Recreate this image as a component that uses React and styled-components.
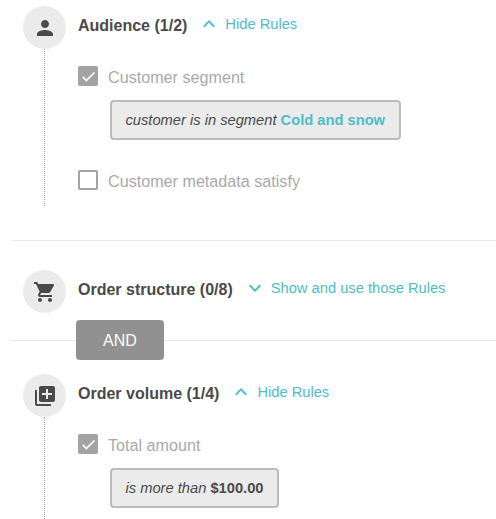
import React from 'react';
import styled, { createGlobalStyle } from 'styled-components';
import { MdPerson, MdShoppingCart, MdLibraryAdd, MdKeyboardArrowUp, MdKeyboardArrowDown, MdCheck } from 'react-icons/md';

const GlobalStyle = createGlobalStyle`
  html, body {
    margin: 0;
    padding: 0;
    background: #fff;
    overflow: hidden;
  }
  body {
    font-family: "Liberation Sans", Arial, sans-serif;
  }
`

const Page = styled.div`
  width: 496px;
  height: 519px;
  overflow: hidden;
`

const Section = styled.section`
  position: relative;
  margin-left: 12px;
  padding: ${(p) => p.$top}px 0 0 11px;
  height: ${(p) => p.$height}px;
  box-sizing: border-box;
  border-bottom: ${(p) => (p.$last ? '0' : '1px solid #e9e9e9')};
`

const Header = styled.div`
  display: flex;
  align-items: center;
  height: 43px;
`

const IconCircle = styled.div`
  width: 43px;
  height: 43px;
  border-radius: 50%;
  background: #ebebeb;
  color: #4a4a4a;
  display: flex;
  align-items: center;
  justify-content: center;
  flex-shrink: 0;
  font-size: 24px;
`

const Title = styled.h3`
  margin: 0 0 0 12px;
  padding-bottom: 4px;
  font-size: 16px;
  line-height: 20px;
  font-weight: 700;
  color: #4a4a4a;
  white-space: nowrap;
`

const Toggle = styled.a`
  display: flex;
  align-items: center;
  margin-left: 10px;
  padding-bottom: 7px;
  font-size: 14.7px;
  line-height: 20px;
  color: #4fbcc8;
  white-space: nowrap;
  svg {
    font-size: 24px;
    margin-right: 4px;
  }
`

const Body = styled.div`
  margin-left: 21px;
  padding: 17px 0 0 33px;
  height: ${(p) => p.$height}px;
  box-sizing: border-box;
  border-left: 1px dotted #a8a8a8;
`

const Rule = styled.div`
  margin-bottom: ${(p) => p.$gap || 0}px;
`

const RuleRow = styled.label`
  display: flex;
  align-items: center;
  gap: 10px;
  height: 20px;
  font-size: 16.15px;
  color: #a9a9a9;
`

const RuleName = styled.span`
  padding-top: 3px;
`

const Checkbox = styled.span`
  width: 20px;
  height: 20px;
  box-sizing: border-box;
  border-radius: 2px;
  border: 2px solid #a3a3a3;
  background: ${(p) => (p.$checked ? '#a3a3a3' : '#fff')};
  color: #f0f0f0;
  display: flex;
  align-items: center;
  justify-content: center;
  font-size: 17px;
  flex-shrink: 0;
  svg {
    flex-shrink: 0;
  }
  svg path:last-child {
    stroke: currentColor;
    stroke-width: 1;
  }
`

const Condition = styled.div`
  display: inline-block;
  margin: 14px 0 0 32px;
  padding: 0 13.5px;
  height: 40px;
  line-height: 36px;
  box-sizing: border-box;
  border: 2px solid #bcbcbc;
  border-radius: 4px;
  background: #ebebeb;
  font-size: 14.7px;
  font-style: italic;
  color: #4a4a4a;
  white-space: nowrap;
`

const Value = styled.b`
  font-style: normal;
  font-weight: 700;
  color: ${(p) => (p.$accent ? '#4fbcc8' : '#4a4a4a')};
`

const AndBadge = styled.div`
  position: absolute;
  left: 64px;
  bottom: -20px;
  width: 88px;
  height: 40px;
  border-radius: 4px;
  background: #919191;
  color: #fff;
  font-size: 16px;
  line-height: 41px;
  text-align: center;
  z-index: 1;
`

export default function App() {
  return (
    <Page>
      <GlobalStyle />
      <Section $top={6} $height={241}>
        <Header>
          <IconCircle><MdPerson /></IconCircle>
          <Title>Audience (1/2)</Title>
          <Toggle><MdKeyboardArrowUp />Hide Rules</Toggle>
        </Header>
        <Body $height={157}>
          <Rule $gap={30}>
            <RuleRow>
              <Checkbox $checked><MdCheck /></Checkbox>
              <RuleName>Customer segment</RuleName>
            </RuleRow>
            <Condition>customer is in segment <Value $accent>Cold and snow</Value></Condition>
          </Rule>
          <Rule>
            <RuleRow>
              <Checkbox />
              <RuleName>Customer metadata satisfy</RuleName>
            </RuleRow>
          </Rule>
        </Body>
      </Section>
      <Section $top={29} $height={100}>
        <Header>
          <IconCircle><MdShoppingCart /></IconCircle>
          <Title>Order structure (0/8)</Title>
          <Toggle><MdKeyboardArrowDown />Show and use those Rules</Toggle>
        </Header>
        <AndBadge>AND</AndBadge>
      </Section>
      <Section $top={33} $height={178} $last>
        <Header>
          <IconCircle><MdLibraryAdd /></IconCircle>
          <Title>Order volume (1/4)</Title>
          <Toggle><MdKeyboardArrowUp />Hide Rules</Toggle>
        </Header>
        <Body $height={102}>
          <Rule>
            <RuleRow>
              <Checkbox $checked><MdCheck /></Checkbox>
              <RuleName>Total amount</RuleName>
            </RuleRow>
            <Condition>is more than <Value>$100.00</Value></Condition>
          </Rule>
        </Body>
      </Section>
    </Page>
  );
}
